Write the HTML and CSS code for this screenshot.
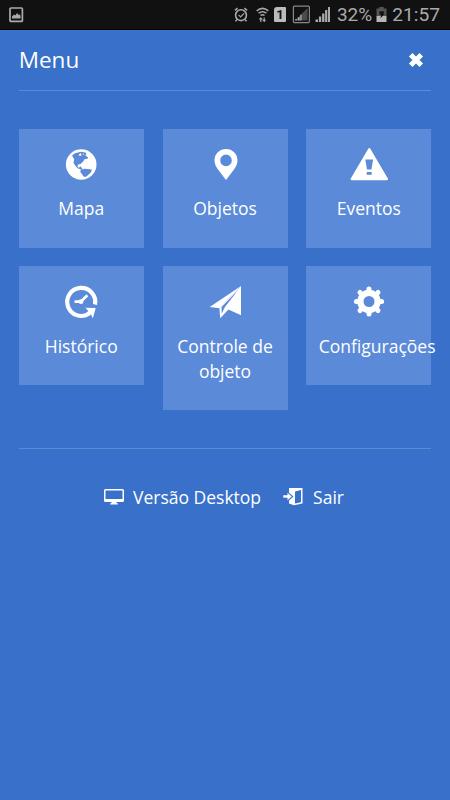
FILE: index.html
```html
<!DOCTYPE html>
<html lang="pt-BR">
<head>
    <meta charset="UTF-8">
    <meta name="viewport" content="width=device-width, initial-scale=1.0">
    <title>Menu</title>
    <link rel="stylesheet" href="styles.css">
</head>
<body>
    <div class="status-bar">
        <svg class="status-picture" width="16" height="18" viewBox="0 0 16 18">
            <rect x="2" y="2" width="12.4" height="13.4" rx="1" fill="none" stroke="#aaa" stroke-width="1.7"/>
            <path d="M4 12.500v-2l2-2 1.200 1 2-2.500 1.300 2 1-.8 1 1.500v2.800z" fill="#aaa"/>
        </svg>
        <div class="status-icons">
            <!-- alarm -->
            <svg width="14" height="16" viewBox="0 0 14 16" fill="none" stroke="#aaa">
                <circle cx="7" cy="8.200" r="5.400" stroke-width="1.600"/>
                <path d="M.9 3.300 3.600 1.100M13.100 3.300 10.400 1.100M2.800 12.500l-1.200 1.800M11.200 12.500l1.200 1.800" stroke-width="1.500"/>
                <path d="m4.600 7.900 2 2 3.400-3.600" stroke-width="1.200"/>
            </svg>
            <!-- wifi -->
            <svg class="icon-wifi" width="13" height="16" viewBox="0 0 13 16" fill="none" stroke="#aaa">
                <path d="M.7 3.800Q6.500-1 12.300 3.800M2.600 6.200q3.900-3.100 7.800 0M4.500 8.500q2-1.600 4 0" stroke-width="1.500"/>
                <path d="M4.800 15v-3.500M8.200 10.500V14" stroke-width="1.200"/>
                <path d="M2.800 12.400 4.800 10l2 2.400zM6.200 12.800l2 2.400 2-2.400z" fill="#aaa" stroke="none"/>
            </svg>
            <!-- sim 1 -->
            <span class="sim">1</span>
            <!-- signal, second sim -->
            <svg class="icon-signal-box" width="19" height="19" viewBox="0 0 19 19">
                <rect x="1.400" y="1.200" width="16" height="16.400" rx="1" fill="none" stroke="#888" stroke-width="1.200"/>
                <path d="M3 15.500 15.500 3v12.500z" fill="#4b4b4b"/>
                <path d="M3.200 15.500V14h1.600v1.500zM5.800 15.500v-3.300h1.800v3.300zM8.300 15.500V9.800h1.300v5.700z" fill="#aaa"/>
            </svg>
            <!-- signal -->
            <svg class="icon-signal" width="16" height="17" viewBox="0 0 16 17" fill="#aaa">
                <path d="M.5 16v-2.500H3V16zM3.900 16v-5.500h2.300V16zM7.100 16V7.500h2.300V16zM10.100 16v-12h2.200v12zM13 16V1h2v15z"/>
            </svg>
            <span class="percent">32%</span>
            <!-- battery -->
            <svg class="icon-battery" width="11" height="17" viewBox="0 0 11 17">
                <path d="M3.300 1h4.400v1.600h2.800V10H.5V2.600h2.800z" fill="#555"/>
                <path d="M.5 10h10v6H.5z" fill="#b5b5b5"/>
                <path d="M3.500 5.200h4.600L7.300 7.500h1.500L4.400 12.500l.8-3.700H3.500z" fill="#111"/>
            </svg>
            <span class="clock">21:57</span>
        </div>
    </div>

    <div class="menu">
        <div class="menu-header">
            <h1>Menu</h1>
            <svg class="close" width="16" height="16" viewBox="0 0 16 16">
                <path d="m2.700 2.700 10.600 10.600M13.300 2.700 2.700 13.300" stroke="#fff" stroke-width="5"/>
            </svg>
        </div>

        <div class="menu-grid">
            <a class="tile">
                <svg width="38" height="38" viewBox="0 0 38 38">
                    <circle cx="19.200" cy="19.500" r="15.300" fill="#fff"/>
                    <path d="M10 10.500 13 8.200 19 6.800l4.500.7 1 1.800-1.300 1 2.800 2-.5 1.500-3 .5-1.300 2.200-2.700 2.400-2.500.7-.5 2.300 1.200.8 1.800-1.200 1.500 1.500.7 1.700-2-.2-3.500-1.500-2-2.500-1.700-2.500.8-3.500z" fill="#5a8ad8"/>
                    <path d="m18.600 25 4-1.200 7.300.8-.9 2.600-3.400 3.200-2 1.500-2-.4-1.700-2.400-1.500-1.800z" fill="#5a8ad8"/>
                    <path d="m16.500 10.300 1.800-2.200 1.500 2-1.500 1zM20.500 8.500l1.800.3-1 1.200z" fill="#fff"/>
                </svg>
                <span>Mapa</span>
            </a>
            <a class="tile">
                <svg width="38" height="38" viewBox="0 0 38 38">
                    <path d="M20 4C13.500 4 8.500 8.900 8.500 15.300c0 3.500 1.500 6.500 3.700 9.400L20 35l7.800-10.300c2.200-2.900 3.700-5.900 3.700-9.400C31.500 8.900 26.500 4 20 4zm0 5.600a5.800 5.800 0 1 1 0 11.600 5.800 5.800 0 0 1 0-11.600z" fill="#fff" fill-rule="evenodd"/>
                </svg>
                <span>Objetos</span>
            </a>
            <a class="tile">
                <svg width="38" height="38" viewBox="0 0 38 38">
                    <path d="M19.300 4.300 36.800 34H1.800z" fill="#fff" stroke="#fff" stroke-width="2.400" stroke-linejoin="round"/>
                    <path d="M15.300 14.500h7.800l-1.700 9.900h-4.400zM16.700 27h5v2.800h-5z" fill="#5a8ad8"/>
                </svg>
                <span>Eventos</span>
            </a>
            <a class="tile">
                <svg width="38" height="38" viewBox="0 0 38 38">
                    <path d="M33 22.500A14 14 0 1 0 26.800 31.700" fill="none" stroke="#fff" stroke-width="4.200"/>
                    <path d="m23.400 25.800 10.300.2-2.800 10.300-2-3.700-3 1.500-1.800-3.200 2.200-1.800z" fill="#fff"/>
                    <path d="M12.600 19.700h6.200l6.600-6.400" fill="none" stroke="#fff" stroke-width="2.700"/>
                    <circle cx="19" cy="19.700" r="2.400" fill="#fff"/>
                </svg>
                <span>Histórico</span>
            </a>
            <a class="tile">
                <svg width="38" height="38" viewBox="0 0 38 38">
                    <path d="M35 4 3.700 25l9.700 1.200z" fill="#fff"/>
                    <path d="M35 4v29.200l-12.600-5.700-8.200 8.700-.8-10z" fill="#fff"/>
                    <path d="M32.500 7.400 15.600 25.100v6.600l3.500-7z" fill="#5a8ad8"/>
                </svg>
                <span>Controle de objeto</span>
            </a>
            <a class="tile">
                <svg width="38" height="38" viewBox="0 0 38 38">
                    <circle cx="19" cy="19.500" r="8.600" fill="none" stroke="#fff" stroke-width="6.200"/>
                    <g stroke="#fff" stroke-width="5" stroke-linecap="round">
                        <path d="M19 7.500v-.6M19 31.500v.6M7 19.500h-.6M31 19.500h.6"/>
                        <path d="m10.300 10.800-.3-.3M27.700 10.800l.3-.3M10.300 28.200l-.3.300M27.700 28.200l.3.300"/>
                    </g>
                </svg>
                <span>Configurações</span>
            </a>
        </div>

        <div class="menu-footer">
            <a class="link">
                <svg width="20" height="18" viewBox="0 0 20 18">
                    <path d="M1.500 1h17q1.500 0 1.500 1.500v10.200q0 1.300-1.500 1.300h-17Q0 14 0 12.700V2.500Q0 1 1.500 1zM1.500 2.500V11h17V2.500z" fill="#fff" fill-rule="evenodd"/>
                    <path d="M7.500 14h5v1l1.300.5v1H6.200v-1l1.300-.5z" fill="#fff"/>
                </svg>
                <span>Versão Desktop</span>
            </a>
            <a class="link link-exit">
                <svg width="20" height="18" viewBox="0 0 20 18">
                    <path d="M6 0h13.500v15.500L11 17.300 6 15.500v-3l4.500-4L6 4.800z" fill="#fff"/>
                    <path d="m12 3.500 6-1.500v12.300l-6 1.100z" fill="#3870ca"/>
                    <path d="M0 6.900h4.200V4.200l5 4.300-5 4.300V10H0z" fill="#fff" stroke="#3870ca" stroke-width=".6"/>
                </svg>
                <span>Sair</span>
            </a>
        </div>
    </div>
</body>
</html>
```

FILE: styles.css
```css
body {
    margin: 0;
    min-height: 100vh;
    background-color: #3870ca;
    color: white;
    font-family: "Open Sans", sans-serif;
    font-size: 17.5px;
    line-height: 25px;
}
svg {
    display: block;
    flex-shrink: 0;
}
.status-bar {
    display: flex;
    align-items: center;
    justify-content: space-between;
    box-sizing: border-box;
    height: 30px;
    padding: 0 10px 0 8px;
    background-color: #111;
    border-bottom: 1px solid #000;
    color: #aaa;
    font-family: Roboto, sans-serif;
    font-size: 19.2px;
}
.status-icons {
    display: flex;
    align-items: center;
}
.icon-wifi {
    margin-left: 8px;
}
.sim {
    width: 12px;
    height: 15px;
    margin-left: 5px;
    background-color: #bbb;
    border-radius: 3px 1px 1px 1px;
    color: #111;
    font-size: 13px;
    font-weight: bold;
    line-height: 15px;
    text-align: center;
}
.icon-signal-box {
    margin-left: 6px;
}
.icon-signal {
    margin-left: 4px;
}
.percent {
    margin-left: 6px;
    font-size: 19px;
}
.icon-battery {
    margin-left: 4px;
}
.clock {
    margin-left: 5px;
}
.menu {
    padding: 0 18.75px;
}
.menu-header {
    display: flex;
    align-items: center;
    justify-content: space-between;
    box-sizing: border-box;
    height: 61.25px;
    padding-right: 7px;
    border-bottom: 1px solid #5a8ad8;
}
h1 {
    margin: 0;
    padding-bottom: 2px;
    font-size: 22.5px;
    font-weight: normal;
}
.menu-grid {
    display: grid;
    grid-template-columns: repeat(3, 125px);
    gap: 18.75px;
    align-items: start;
    padding: 37.5px 0;
    border-bottom: 1px solid #5a8ad8;
}
.tile {
    box-sizing: border-box;
    min-height: 118.75px;
    padding: 16px 12.5px 26.25px;
    background-color: #5a8ad8;
    text-align: center;
}
.tile svg {
    margin: 0 auto 13.5px;
}
.tile span {
    display: block;
}
.menu-footer {
    display: flex;
    justify-content: center;
    padding: 36px 2px 0 0;
}
.link {
    display: flex;
    align-items: center;
}
.link span {
    margin-left: 9px;
}
.link-exit {
    margin-left: 22px;
}
.link-exit span {
    margin-left: 10px;
}
```
